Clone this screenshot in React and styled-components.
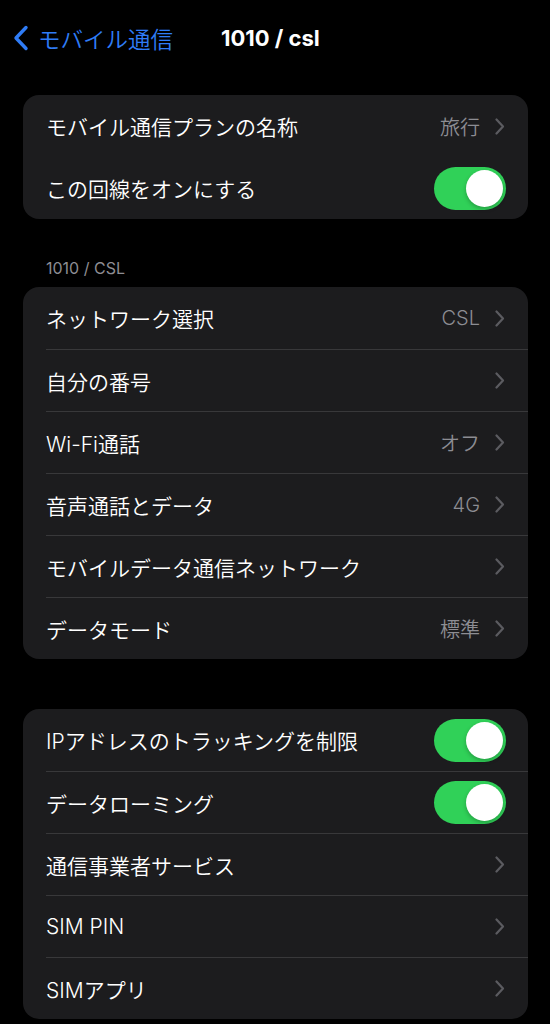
import styled, { createGlobalStyle } from "styled-components";

const GlobalStyle = createGlobalStyle`
  html, body {
    margin: 0;
    padding: 0;
    background: #000;
  }
  body {
    font-family: Inter, "Noto Sans CJK JP", "Noto Sans", sans-serif;
    color: #fff;
    -webkit-font-smoothing: antialiased;
  }
`;

const Page = styled.div`
  width: 550px;
  min-height: 1024px;
  background: #000;
  overflow: hidden;
`;

const Header = styled.header`
  height: 76px;
  display: flex;
  align-items: center;
  padding: 0 0 0 12px;
`;

const BackButton = styled.div`
  display: flex;
  align-items: center;
  gap: 8px;
  color: #2f7cf6;
  font-size: 22.5px;
  font-weight: 350;
  width: 209px;
  margin-top: -1px;
`;

const Title = styled.h1`
  margin: 0;
  font-size: 22px;
  font-weight: 700;
  color: #fff;
`;

const Group = styled.section`
  margin: ${({ $top }) => $top}px 22px 0 23px;
  background: #1c1c1e;
  border-radius: 16px;
  overflow: hidden;
`;

const SectionLabel = styled.div`
  margin: 40px 0 0 46px;
  font-size: 16px;
  color: #8d8d93;
  height: 19px;
  line-height: 19px;
`;

const Row = styled.div`
  height: 62px;
  display: flex;
  align-items: center;
  padding-left: 23px;
`;

const RowInner = styled.div`
  flex: 1;
  height: 100%;
  display: flex;
  align-items: center;
  padding-right: 23px;
  border-top: ${({ $divider }) => ($divider ? "1px solid #38383a" : "none")};
  box-sizing: border-box;
`;

const Label = styled.span`
  flex: 1;
  font-size: 21px;
  font-weight: 350;
  color: #fff;
  white-space: nowrap;
`;

const Value = styled.span`
  font-size: 20px;
  font-weight: 350;
  color: #8d8d93;
  margin-right: 15px;
`;

const Chevron = styled.svg`
  width: 10px;
  height: 17px;
  flex-shrink: 0;
`;

const Toggle = styled.div`
  width: 72px;
  height: 43px;
  border-radius: 22px;
  background: #30d158;
  position: relative;
  margin-right: -1px;
`;

const Knob = styled.div`
  position: absolute;
  top: 3px;
  right: 3px;
  width: 37px;
  height: 37px;
  border-radius: 50%;
  background: #fff;
  box-shadow: 0 2px 4px rgba(0, 0, 0, 0.25);
`;

const ChevronIcon = () => (
  <Chevron viewBox="0 0 10 17">
    <path
      d="M1.5 1.5 L8 8.5 L1.5 15.5"
      fill="none"
      stroke="#5b5b60"
      strokeWidth="2.2"
      strokeLinecap="round"
      strokeLinejoin="round"
    />
  </Chevron>
);

const Item = ({ label, value, toggle, divider }) => (
  <Row>
    <RowInner $divider={divider}>
      <Label>{label}</Label>
      {toggle ? (
        <Toggle>
          <Knob />
        </Toggle>
      ) : (
        <>
          {value && <Value>{value}</Value>}
          <ChevronIcon />
        </>
      )}
    </RowInner>
  </Row>
);

const groupA = [
  { label: "モバイル通信プランの名称", value: "旅行" },
  { label: "この回線をオンにする", toggle: true },
];

const groupB = [
  { label: "ネットワーク選択", value: "CSL" },
  { label: "自分の番号" },
  { label: "Wi-Fi通話", value: "オフ" },
  { label: "音声通話とデータ", value: "4G" },
  { label: "モバイルデータ通信ネットワーク" },
  { label: "データモード", value: "標準" },
];

const groupC = [
  { label: "IPアドレスのトラッキングを制限", toggle: true },
  { label: "データローミング", toggle: true },
  { label: "通信事業者サービス" },
  { label: "SIM PIN" },
  { label: "SIMアプリ" },
];

const renderRows = (rows, dividers = true) =>
  rows.map((r, i) => (
    <Item key={r.label} {...r} divider={dividers && i > 0} />
  ));

export default function App() {
  return (
    <Page>
      <GlobalStyle />
      <Header>
        <BackButton>
          <svg width="18" height="26" viewBox="0 0 18 26">
            <path
              d="M14 2.5 L4 13 L14 23.5"
              fill="none"
              stroke="#2f7cf6"
              strokeWidth="3.4"
              strokeLinecap="round"
              strokeLinejoin="round"
            />
          </svg>
          <span>モバイル通信</span>
        </BackButton>
        <Title>1010 / csl</Title>
      </Header>
      <Group $top={19}>{renderRows(groupA, false)}</Group>
      <SectionLabel>1010 / CSL</SectionLabel>
      <Group $top={9}>{renderRows(groupB)}</Group>
      <Group $top={50}>{renderRows(groupC)}</Group>
    </Page>
  );
}
